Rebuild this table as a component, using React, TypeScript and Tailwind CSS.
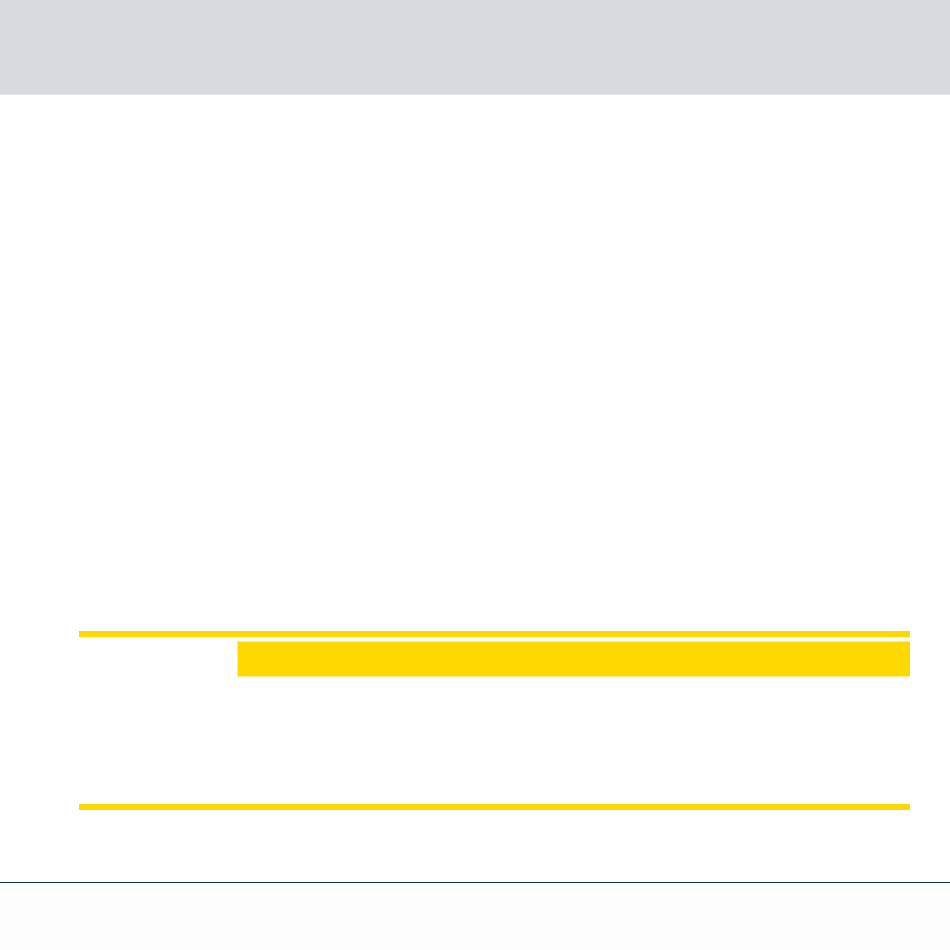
import React from "react";

export default function App() {
  return (
    <div className="min-h-[950px] w-full bg-white font-['Liberation_Sans',sans-serif]">
      {/* Header band */}
      <header className="h-[95px] w-full bg-[#d9dadf] border-b border-[#e4e5e8]" />

      {/* Content */}
      <main className="h-[536px]" />

      <section className="ml-[79px] mr-[40px]">
        <div className="h-[6px] bg-[#ffd800]" />
        <div className="grid grid-cols-[158px_1fr] mt-[4px] h-[163px]">
          <div />
          <div className="h-[36px] bg-[#ffd800] border border-[#ffe98a] border-r-0" />
        </div>
        <div className="h-[6px] bg-[#ffd800]" />
      </section>

      {/* Footer */}
      <footer className="mt-[72px] border-t border-[#0b2f55] h-[68px] bg-[#fdfdfd]" />
    </div>
  );
}
